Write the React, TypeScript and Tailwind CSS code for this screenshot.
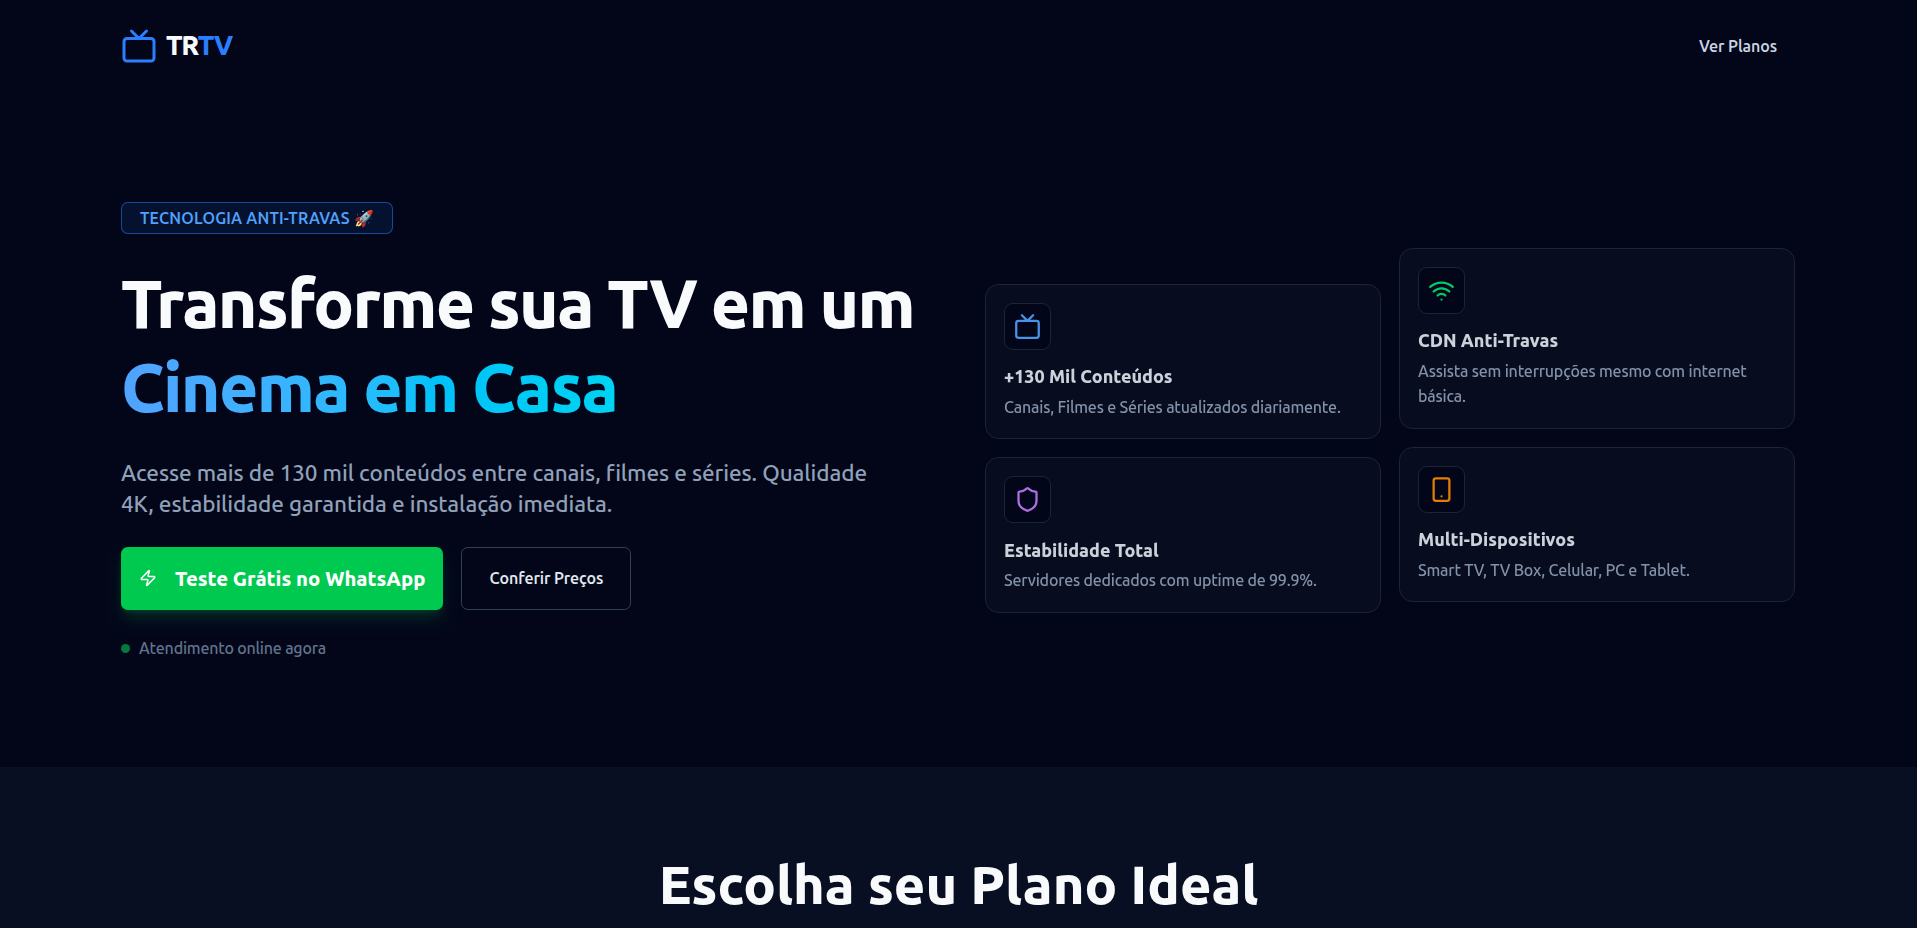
import React from 'react';
import { Tv, Wifi, Shield, Smartphone, Zap } from 'lucide-react';

const leftFeatures = [
  {
    title: '+130 Mil Conteúdos',
    text: 'Canais, Filmes e Séries atualizados diariamente.',
    icon: <Tv className="size-[27px] text-blue-400" />,
  },
  {
    title: 'Estabilidade Total',
    text: 'Servidores dedicados com uptime de 99.9%.',
    icon: <Shield className="size-[27px] text-purple-400" />,
  },
];

const rightFeatures = [
  {
    title: 'CDN Anti-Travas',
    text: 'Assista sem interrupções mesmo com internet básica.',
    icon: <Wifi className="size-[27px] text-green-400" />,
  },
  {
    title: 'Multi-Dispositivos',
    text: 'Smart TV, TV Box, Celular, PC e Tablet.',
    icon: <Smartphone className="size-[27px] text-orange-400" />,
  },
];

type Feature = (typeof leftFeatures)[number];

const FeatureCard: React.FC<{ feature: Feature }> = ({ feature }) => (
  <div className="rounded-[13.5px] border border-slate-800 bg-slate-900/45 p-[18px] opacity-90">
    <div className="mb-[13.5px] w-fit rounded-[9px] border border-slate-800 bg-slate-950 p-[9px]">
      {feature.icon}
    </div>
    <h3 className="mb-[4.5px] text-[18px] leading-[27px] font-extrabold text-slate-200">
      {feature.title}
    </h3>
    <p className="text-[16px] leading-[25.5px] font-medium tracking-[-0.0125em] text-slate-400">
      {feature.text}
    </p>
  </div>
);

const Header: React.FC = () => (
  <header className="mx-auto flex h-[93.5px] w-full max-w-[1728px] items-center justify-between px-[27px]">
    <div className="flex items-center gap-[9px] pb-[1.5px]">
      <Tv className="size-[36px] text-[#2b7fff]" />
      <span className="pb-px text-[27px] leading-[35px] font-extrabold tracking-[-0.05em] text-slate-50">
        TR<span className="text-[#2b7fff]">TV</span>
      </span>
    </div>
    <a
      href="#planos"
      className="px-[18px] pt-[0.5px] font-['Ubuntu_Sans',Ubuntu,sans-serif] text-[16px] font-semibold tracking-[-0.006em] text-slate-300"
    >
      Ver Planos
    </a>
  </header>
);

const Hero: React.FC = () => (
  <section className="mx-auto grid w-full max-w-[1728px] grid-cols-2 items-center gap-[54px] px-[27px] py-[108px]">
    <div className="flex flex-col items-start gap-[27px]">
      <div className="flex h-[32.5px] w-[272px] items-center rounded-[6.75px] border border-blue-500/50 bg-blue-500/10 px-[18px] pt-[1.5px] font-['Ubuntu_Sans',Ubuntu,sans-serif] text-[16px] font-semibold tracking-[0.012em] whitespace-nowrap text-blue-400">
        TECNOLOGIA ANTI-TRAVAS 🚀
      </div>

      <h1 className="text-[67.5px] leading-[84.375px] font-extrabold tracking-[-0.025em] whitespace-nowrap text-slate-50">
        Transforme sua TV em um
        <br />
        <span className="bg-linear-to-r from-blue-400 to-cyan-400 bg-clip-text text-transparent">
          Cinema em Casa
        </span>
      </h1>

      <p className="max-w-[756px] text-[22.5px] leading-[31.5px] font-medium tracking-[-0.004em] text-slate-400">
        Acesse mais de 130 mil conteúdos entre canais, filmes e séries. Qualidade 4K, estabilidade
        garantida e instalação imediata.
      </p>

      <div className="flex gap-[18px]">
        <button className="flex h-[63px] items-center gap-[18px] rounded-[6.75px] bg-[#00c950] px-[18px] text-[20.25px] font-extrabold text-white shadow-lg shadow-green-500/20">
          <Zap className="size-[18px]" />
          <span className="pt-px">Teste Grátis no WhatsApp</span>
        </button>
        <button className="h-[63px] w-[170px] rounded-[6.75px] border border-slate-700 pt-[2px] font-['Ubuntu_Sans',Ubuntu,sans-serif] text-[16px] font-semibold tracking-[-0.006em] text-slate-200">
          Conferir Preços
        </button>
      </div>

      <div className="flex items-center gap-[9px] text-[16px] leading-[22.5px] font-medium tracking-[-0.0125em] text-slate-500">
        <span className="size-[9px] rounded-full bg-[#017a3b]" />
        Atendimento online agora
      </div>
    </div>

    <div className="grid grid-cols-2 gap-[18px]">
      <div className="mt-[36px] space-y-[18px]">
        {leftFeatures.map((feature) => (
          <FeatureCard key={feature.title} feature={feature} />
        ))}
      </div>
      <div className="space-y-[18px]">
        {rightFeatures.map((feature) => (
          <FeatureCard key={feature.title} feature={feature} />
        ))}
      </div>
    </div>
  </section>
);

export default function App() {
  return (
    <div className="h-screen overflow-hidden bg-slate-950 font-[Ubuntu,'Noto_Sans',sans-serif] text-slate-50">
      <div className="pr-px">
        <Header />
        <Hero />
      </div>
      <section id="planos" className="bg-slate-900/50 px-[27px] py-[90px]">
        <h2 className="text-center text-[54px] leading-none font-extrabold">
          Escolha seu Plano Ideal
        </h2>
      </section>
    </div>
  );
}
